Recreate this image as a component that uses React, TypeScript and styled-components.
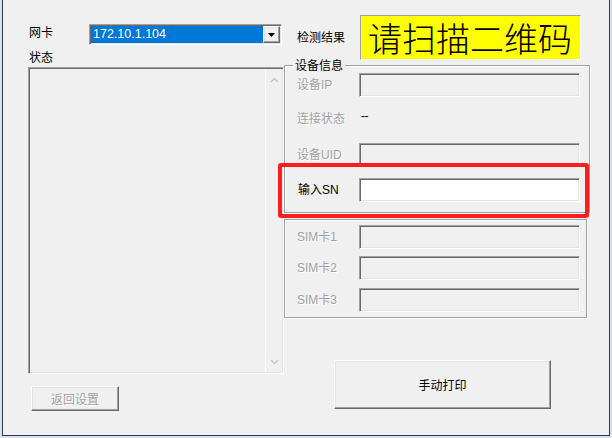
import React from "react";
import styled, { createGlobalStyle } from "styled-components";

const GlobalStyle = createGlobalStyle`
  html, body {
    margin: 0;
    padding: 0;
    background: #dde0e4;
  }
  body {
    font-family: "Liberation Sans", "Noto Sans CJK SC", sans-serif;
    font-size: 12px;
    color: #000;
  }
`;

const sunken = `
  box-sizing: border-box;
  border-style: solid;
  border-width: 1px;
  border-color: #a0a0a0 #ffffff #ffffff #a0a0a0;
  box-shadow: inset 1px 1px 0 #696969, inset -1px -1px 0 #e3e3e3;
`;

const raised = `
  box-sizing: border-box;
  border-style: solid;
  border-width: 1px;
  border-color: #ffffff #696969 #696969 #ffffff;
  box-shadow: inset -1px -1px 0 #a0a0a0, inset 1px 1px 0 #e3e3e3;
`;

const Window = styled.div`
  position: relative;
  box-sizing: border-box;
  width: 608px;
  height: 436px;
  margin-left: 2px;
  background: #f0f0f0;
  border: 1px solid #22395a;
  border-top: none;
  display: flex;
  align-items: flex-start;
  padding-left: 25px;
`;

const LeftColumn = styled.div`
  width: 256px;
  padding-top: 24px;
  display: flex;
  flex-direction: column;
`;

const RightColumn = styled.div`
  width: 306px;
  padding-top: 15px;
  display: flex;
  flex-direction: column;
`;

const NicRow = styled.div`
  display: flex;
  align-items: flex-start;
  height: 21px;
`;

type LabelProps = { $width?: number; $pad?: number; $disabled?: boolean };

const Label = styled.div<LabelProps>`
  box-sizing: border-box;
  width: ${(p) => (p.$width ? `${p.$width}px` : "auto")};
  padding-left: ${(p) => p.$pad ?? 0}px;
  line-height: 14px;
  white-space: nowrap;
  color: ${(p) => (p.$disabled ? "#a0a0a0" : "#000")};
  text-shadow: ${(p) => (p.$disabled ? "1px 1px 0 #ffffff" : "none")};
`;

const NicLabel = styled(Label)`
  padding-top: 2px;
`;

const StatusLabel = styled(Label)`
  height: 22px;
  padding-top: 6px;
  padding-left: 1px;
`;

const Combo = styled.div`
  ${sunken}
  width: 193px;
  height: 21px;
  padding: 1px;
  display: flex;
`;

const ComboValue = styled.div`
  flex: 1;
  background: #0078d7;
  color: #fff;
  font-family: "Liberation Sans", sans-serif;
  font-size: 12.5px;
  line-height: 17px;
  padding-left: 2px;
`;

const ComboButton = styled.div`
  ${raised}
  width: 17px;
  background: #f0f0f0;
  display: flex;
  align-items: center;
  justify-content: center;
`;

const ListBox = styled.div`
  ${sunken}
  width: 256px;
  height: 307px;
  display: flex;
  justify-content: flex-end;
  padding: 1px 1px 1px 0;
`;

const ScrollBar = styled.div`
  width: 16px;
  border-left: 1px solid #ffffff;
  display: flex;
  flex-direction: column;
  align-items: center;
  justify-content: space-between;
  padding: 8px 0 7px;
`;

type WinButtonProps = { $w: number; $h: number; $disabled?: boolean };

const WinButton = styled.button<WinButtonProps>`
  ${raised}
  width: ${(p) => p.$w}px;
  height: ${(p) => p.$h}px;
  padding: 0;
  background: #f0f0f0;
  font-family: "Liberation Sans", "Noto Sans CJK SC", sans-serif;
  font-size: 12px;
  color: ${(p) => (p.$disabled ? "#a0a0a0" : "#000")};
  text-shadow: ${(p) => (p.$disabled ? "1px 1px 0 #ffffff" : "none")};
`;

const BackButton = styled(WinButton)`
  margin-top: 12px;
  margin-left: 3px;
`;

const PrintButton = styled(WinButton)`
  margin-top: 42px;
  margin-left: 50px;
`;

const ResultRow = styled.div`
  display: flex;
  align-items: center;
  height: 45px;
`;

const ResultBox = styled.div`
  box-sizing: border-box;
  width: 221px;
  height: 45px;
  background: #ffff00;
  border: 1px solid;
  border-color: #a0a0a0 #ffffff #ffffff #a0a0a0;
  display: flex;
  align-items: center;
  font-family: "Noto Sans CJK SC", sans-serif;
  font-weight: 300;
  font-size: 34px;
  line-height: 43px;
  padding-left: 7px;
  white-space: nowrap;
`;

type GroupProps = { $w: number; $top: number; $bottom: number };

const GroupBox = styled.div<GroupProps>`
  position: relative;
  box-sizing: border-box;
  width: ${(p) => p.$w}px;
  margin-top: ${(p) => p.$top}px;
  padding-bottom: ${(p) => p.$bottom}px;
  border: 1px solid #a0a0a0;
  box-shadow: inset 1px 1px 0 #ffffff, 1px 1px 0 #ffffff;
  display: flex;
  flex-direction: column;
`;

const Legend = styled.span`
  position: absolute;
  top: -7px;
  left: 8px;
  padding: 0 2px;
  background: #f0f0f0;
  line-height: 14px;
`;

type RowProps = { $top: number; $highlight?: boolean };

const FieldRow = styled.div<RowProps>`
  position: relative;
  display: flex;
  align-items: center;
  height: 24px;
  margin-top: ${(p) => p.$top}px;

  ${(p) =>
    p.$highlight &&
    `
    &::after {
      content: "";
      position: absolute;
      left: -7px;
      right: 0;
      top: -15px;
      bottom: -16px;
      border: 4px solid #ff1d1d;
      border-radius: 3px;
      pointer-events: none;
    }
  `}
`;

const Field = styled.div<{ $white?: boolean }>`
  ${sunken}
  width: 221px;
  height: 24px;
  background: ${(p) => (p.$white ? "#ffffff" : "#f0f0f0")};
`;

const Dash = styled.span`
  margin-left: 2px;
  margin-top: -6px;
  line-height: 14px;
  letter-spacing: -0.5px;
`;

const ChevronUp = () => (
  <svg width="9" height="6" viewBox="0 0 9 6">
    <polyline points="1,5 4.5,1.5 8,5" fill="none" stroke="#c4c4c4" strokeWidth="1.5" />
  </svg>
);

const ChevronDown = () => (
  <svg width="9" height="6" viewBox="0 0 9 6">
    <polyline points="1,1 4.5,4.5 8,1" fill="none" stroke="#c4c4c4" strokeWidth="1.5" />
  </svg>
);

const DropArrow = () => (
  <svg width="7" height="4" viewBox="0 0 7 4">
    <polygon points="0,0 7,0 3.5,4" fill="#000" />
  </svg>
);

const simRows = [
  { label: "SIM卡1", top: 5 },
  { label: "SIM卡2", top: 7 },
  { label: "SIM卡3", top: 8 },
];

export default function App() {
  return (
    <>
      <GlobalStyle />
      <Window>
        <LeftColumn>
          <NicRow>
            <NicLabel $width={61} $pad={1}>
              网卡
            </NicLabel>
            <Combo>
              <ComboValue>172.10.1.104</ComboValue>
              <ComboButton>
                <DropArrow />
              </ComboButton>
            </Combo>
          </NicRow>
          <StatusLabel>状态</StatusLabel>
          <ListBox>
            <ScrollBar>
              <ChevronUp />
              <ChevronDown />
            </ScrollBar>
          </ListBox>
          <BackButton $w={88} $h={25} $disabled>
            返回设置
          </BackButton>
        </LeftColumn>

        <RightColumn>
          <ResultRow>
            <Label $width={76} $pad={13}>
              检测结果
            </Label>
            <ResultBox>请扫描二维码</ResultBox>
          </ResultRow>

          <GroupBox $w={306} $top={5} $bottom={10}>
            <Legend>设备信息</Legend>
            <FieldRow $top={7}>
              <Label $width={74} $pad={12} $disabled>
                设备IP
              </Label>
              <Field />
            </FieldRow>
            <FieldRow $top={10}>
              <Label $width={74} $pad={12} $disabled>
                连接状态
              </Label>
              <Dash>--</Dash>
            </FieldRow>
            <FieldRow $top={12}>
              <Label $width={74} $pad={12} $disabled>
                设备UID
              </Label>
              <Field />
            </FieldRow>
            <FieldRow $top={11} $highlight>
              <Label $width={74} $pad={13}>
                输入SN
              </Label>
              <Field $white />
            </FieldRow>
          </GroupBox>

          <GroupBox $w={303} $top={6} $bottom={5}>
            {simRows.map((r) => (
              <FieldRow key={r.label} $top={r.top}>
                <Label $width={74} $pad={12} $disabled>
                  {r.label}
                </Label>
                <Field />
              </FieldRow>
            ))}
          </GroupBox>

          <PrintButton $w={217} $h={49}>
            手动打印
          </PrintButton>
        </RightColumn>
      </Window>
    </>
  );
}
